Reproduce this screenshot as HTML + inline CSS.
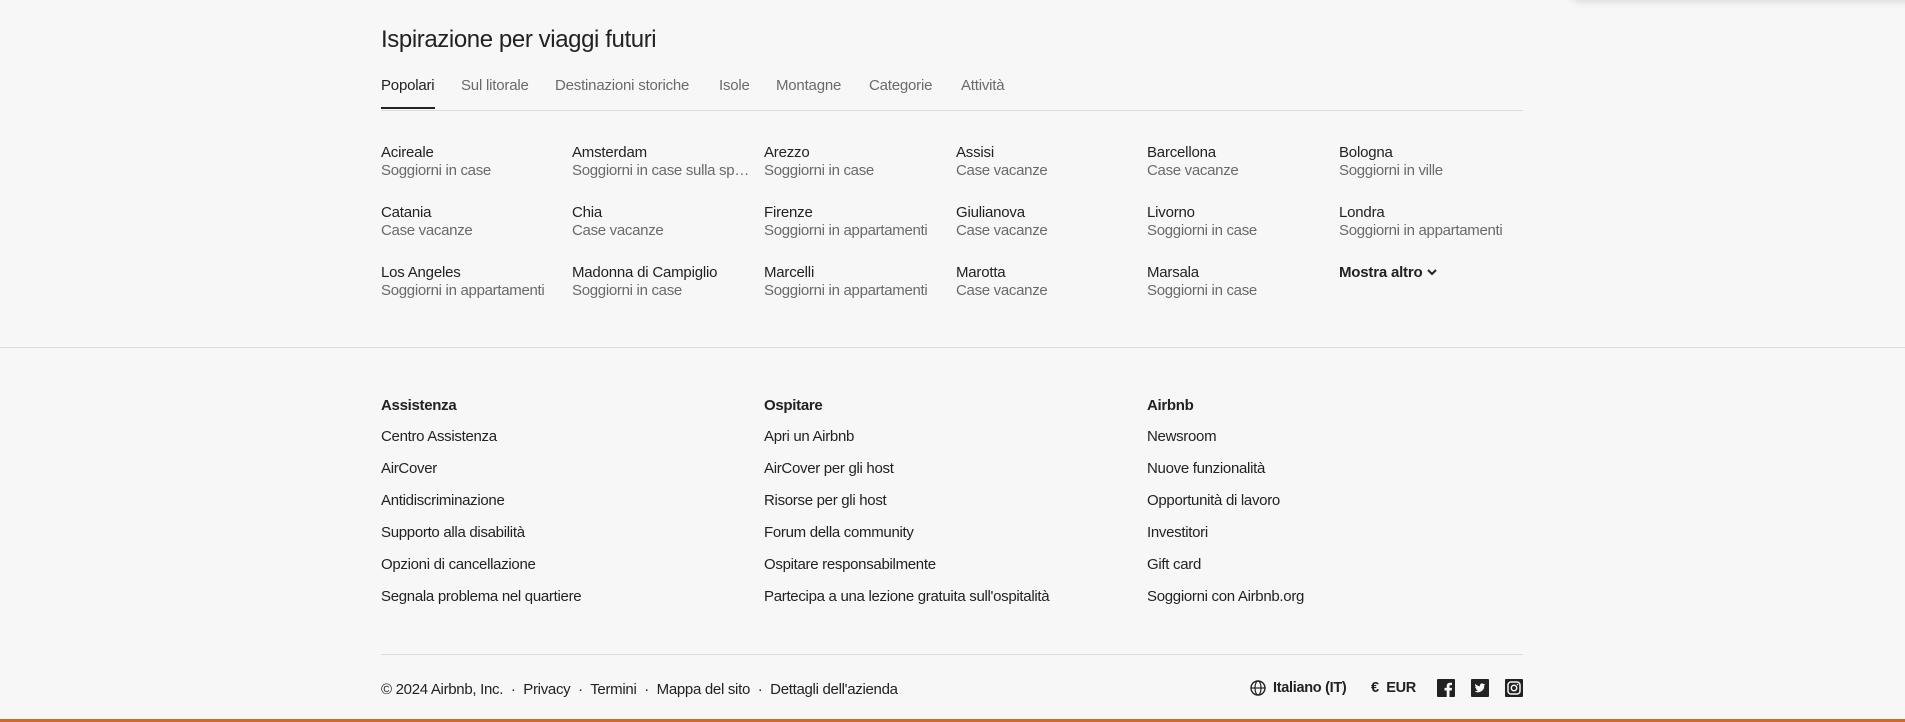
<!DOCTYPE html>
<html><head><meta charset="utf-8"><style>
*{margin:0;padding:0;box-sizing:border-box}
body{width:1905px;height:722px;background:#f7f7f7;font-family:"Liberation Sans",sans-serif;color:#222;position:relative;overflow:hidden}
.a{position:absolute;white-space:nowrap}
h1{position:absolute;left:381px;top:26px;font-size:24px;font-weight:normal;letter-spacing:-0.4px}
.tab{position:absolute;top:77px;font-size:15px;color:#6a6a6a;letter-spacing:-0.2px}
.tab.on{color:#222}
.n{font-size:15px;color:#222;letter-spacing:-0.2px}
.s{font-size:15px;color:#6a6a6a;letter-spacing:-0.3px}
.f{font-size:15px;color:#222;letter-spacing:-0.3px}
.h{font-size:15px;font-weight:bold;letter-spacing:-0.3px}
.hr{position:absolute;height:1px;background:#dddddd}
</style></head><body>
<div style="position:absolute;left:1570px;top:-20px;width:360px;height:20px;background:#fff;box-shadow:0 2px 8px rgba(0,0,0,.12);border-radius:0 0 10px 10px"></div>
<h1>Ispirazione per viaggi futuri</h1>
<div class="tab on" style="left:381px">Popolari</div>
<div class="tab" style="left:461px">Sul litorale</div>
<div class="tab" style="left:555px">Destinazioni storiche</div>
<div class="tab" style="left:719px">Isole</div>
<div class="tab" style="left:776px">Montagne</div>
<div class="tab" style="left:869px">Categorie</div>
<div class="tab" style="left:961px">Attività</div>
<div class="hr" style="left:381px;top:110px;width:1142px"></div>
<div style="position:absolute;left:381px;top:107px;width:54px;height:2px;background:#222"></div>

<div class="a n" style="left:381px;top:144px">Acireale</div><div class="a s" style="left:381px;top:162px">Soggiorni in case</div>
<div class="a n" style="left:572px;top:144px">Amsterdam</div><div class="a s" style="left:572px;top:162px;width:180px;overflow:hidden;text-overflow:ellipsis">Soggiorni in case sulla spiaggia</div>
<div class="a n" style="left:764px;top:144px">Arezzo</div><div class="a s" style="left:764px;top:162px">Soggiorni in case</div>
<div class="a n" style="left:956px;top:144px">Assisi</div><div class="a s" style="left:956px;top:162px">Case vacanze</div>
<div class="a n" style="left:1147px;top:144px">Barcellona</div><div class="a s" style="left:1147px;top:162px">Case vacanze</div>
<div class="a n" style="left:1339px;top:144px">Bologna</div><div class="a s" style="left:1339px;top:162px">Soggiorni in ville</div>

<div class="a n" style="left:381px;top:204px">Catania</div><div class="a s" style="left:381px;top:222px">Case vacanze</div>
<div class="a n" style="left:572px;top:204px">Chia</div><div class="a s" style="left:572px;top:222px">Case vacanze</div>
<div class="a n" style="left:764px;top:204px">Firenze</div><div class="a s" style="left:764px;top:222px">Soggiorni in appartamenti</div>
<div class="a n" style="left:956px;top:204px">Giulianova</div><div class="a s" style="left:956px;top:222px">Case vacanze</div>
<div class="a n" style="left:1147px;top:204px">Livorno</div><div class="a s" style="left:1147px;top:222px">Soggiorni in case</div>
<div class="a n" style="left:1339px;top:204px">Londra</div><div class="a s" style="left:1339px;top:222px">Soggiorni in appartamenti</div>

<div class="a n" style="left:381px;top:264px">Los Angeles</div><div class="a s" style="left:381px;top:282px">Soggiorni in appartamenti</div>
<div class="a n" style="left:572px;top:264px">Madonna di Campiglio</div><div class="a s" style="left:572px;top:282px">Soggiorni in case</div>
<div class="a n" style="left:764px;top:264px">Marcelli</div><div class="a s" style="left:764px;top:282px">Soggiorni in appartamenti</div>
<div class="a n" style="left:956px;top:264px">Marotta</div><div class="a s" style="left:956px;top:282px">Case vacanze</div>
<div class="a n" style="left:1147px;top:264px">Marsala</div><div class="a s" style="left:1147px;top:282px">Soggiorni in case</div>
<div class="a n" style="left:1339px;top:264px;font-weight:bold">Mostra altro <svg width="12" height="10" viewBox="0 0 12 10" style="vertical-align:0"><path d="M2 3l4 4 4-4" fill="none" stroke="#222" stroke-width="2"/></svg></div>

<div class="hr" style="left:0;top:347px;width:1905px"></div>

<div class="a h" style="left:381px;top:397px">Assistenza</div>
<div class="a f" style="left:381px;top:428px">Centro Assistenza</div>
<div class="a f" style="left:381px;top:460px">AirCover</div>
<div class="a f" style="left:381px;top:492px">Antidiscriminazione</div>
<div class="a f" style="left:381px;top:524px">Supporto alla disabilità</div>
<div class="a f" style="left:381px;top:556px">Opzioni di cancellazione</div>
<div class="a f" style="left:381px;top:588px">Segnala problema nel quartiere</div>

<div class="a h" style="left:764px;top:397px">Ospitare</div>
<div class="a f" style="left:764px;top:428px">Apri un Airbnb</div>
<div class="a f" style="left:764px;top:460px">AirCover per gli host</div>
<div class="a f" style="left:764px;top:492px">Risorse per gli host</div>
<div class="a f" style="left:764px;top:524px">Forum della community</div>
<div class="a f" style="left:764px;top:556px">Ospitare responsabilmente</div>
<div class="a f" style="left:764px;top:588px">Partecipa a una lezione gratuita sull'ospitalità</div>

<div class="a h" style="left:1147px;top:397px">Airbnb</div>
<div class="a f" style="left:1147px;top:428px">Newsroom</div>
<div class="a f" style="left:1147px;top:460px">Nuove funzionalità</div>
<div class="a f" style="left:1147px;top:492px">Opportunità di lavoro</div>
<div class="a f" style="left:1147px;top:524px">Investitori</div>
<div class="a f" style="left:1147px;top:556px">Gift card</div>
<div class="a f" style="left:1147px;top:588px">Soggiorni con Airbnb.org</div>

<div class="hr" style="left:381px;top:654px;width:1142px"></div>
<div class="a f" style="left:381px;top:681px">© 2024 Airbnb, Inc. &nbsp;·&nbsp; Privacy &nbsp;·&nbsp; Termini &nbsp;·&nbsp; Mappa del sito &nbsp;·&nbsp; Dettagli dell'azienda</div>
<svg class="a" style="left:1250px;top:680px" width="16" height="16" viewBox="0 0 16 16"><circle cx="8" cy="8" r="7" fill="none" stroke="#222" stroke-width="1.4"/><ellipse cx="8" cy="8" rx="3" ry="7" fill="none" stroke="#222" stroke-width="1.2"/><path d="M1 8h14" stroke="#222" stroke-width="1.2"/></svg>
<div class="a f" style="left:1273px;top:680px;font-weight:600;font-size:14.5px">Italiano (IT)</div>
<div class="a f" style="left:1371px;top:680px;font-weight:600;font-size:14.5px">€&nbsp; EUR</div>
<svg class="a" style="left:1437px;top:679px" width="18" height="18" viewBox="0 0 18 18"><rect width="18" height="18" rx="1" fill="#222"/><path d="M12.5 18v-6.5h2.2l.3-2.6h-2.5V7.3c0-.8.2-1.2 1.3-1.2H15V3.8c-.3 0-1-.1-2-.1-2 0-3.3 1.2-3.3 3.4v1.8H7.5v2.6h2.2V18z" fill="#f7f7f7"/></svg>
<svg class="a" style="left:1471px;top:679px" width="18" height="18" viewBox="0 0 18 18"><rect width="18" height="18" rx="1" fill="#222"/><path d="M14.5 5.5c-.4.2-.8.3-1.3.4.5-.3.8-.7 1-1.2-.4.3-.9.4-1.4.5a2.2 2.2 0 0 0-3.8 2A6.3 6.3 0 0 1 4.4 4.9a2.2 2.2 0 0 0 .7 3c-.4 0-.7-.1-1-.3 0 1.1.8 2 1.8 2.2-.3.1-.7.1-1 0 .3.9 1.1 1.5 2.1 1.5A4.5 4.5 0 0 1 3.5 12.3 6.3 6.3 0 0 0 13.2 6.6v-.3c.5-.2.9-.5 1.300-.8z" fill="#f7f7f7"/></svg>
<svg class="a" style="left:1505px;top:679px" width="18" height="18" viewBox="0 0 18 18"><rect width="18" height="18" rx="1" fill="#222"/><rect x="3" y="3" width="12" height="12" rx="3" fill="none" stroke="#f7f7f7" stroke-width="1.5"/><circle cx="9" cy="9" r="2.7" fill="none" stroke="#f7f7f7" stroke-width="1.5"/><circle cx="12.5" cy="5.5" r=".8" fill="#f7f7f7"/></svg>

<div style="position:absolute;left:0;top:719px;width:1905px;height:3px;background:#d2692c"></div>
</body></html>
